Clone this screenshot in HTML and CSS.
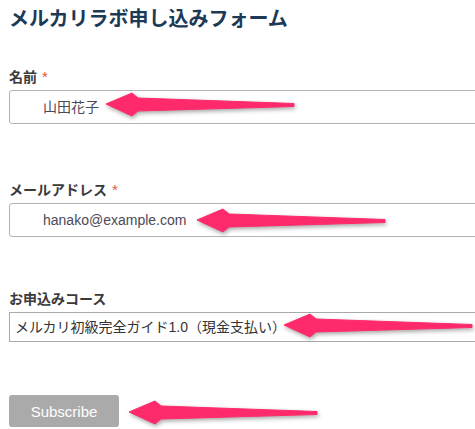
FILE: index.html
```html
<!DOCTYPE html>
<html lang="ja">
<head>
<meta charset="utf-8">
<title>メルカリラボ申し込みフォーム</title>
<link rel="stylesheet" href="styles.css">
</head>
<body>
<div class="page">
  <h1 class="title">メルカリラボ申し込みフォーム</h1>

  <div class="field field-name">
    <label class="label">名前<span class="req">*</span></label>
    <div class="input">山田花子</div>
  </div>

  <div class="field field-email">
    <label class="label">メールアドレス<span class="req">*</span></label>
    <div class="input">hanako@example.com</div>
  </div>

  <div class="field field-course">
    <label class="label">お申込みコース</label>
    <div class="select">メルカリ初級完全ガイド1.0（現金支払い）</div>
  </div>

  <div class="actions">
    <button class="btn" type="button">Subscribe</button>
  </div>
</div>

<svg class="arrow arrow-1" width="200" height="32" viewBox="0 0 200 32"><path d="M4,14 L30,3 L36,8 L192,13.5 L192,16.5 L36,21 L30,26 Z"/></svg>
<svg class="arrow arrow-2" width="200" height="32" viewBox="0 0 200 32"><path d="M4,14 L30,3 L36,8 L192,13.5 L192,16.5 L36,21 L30,26 Z"/></svg>
<svg class="arrow arrow-3" width="200" height="32" viewBox="0 0 200 32"><path d="M4,14 L30,3 L36,8 L192,13.5 L192,16.5 L36,21 L30,26 Z"/></svg>
<svg class="arrow arrow-4" width="200" height="32" viewBox="0 0 200 32"><path d="M4,14 L30,3 L36,8 L192,13.5 L192,16.5 L36,21 L30,26 Z"/></svg>
</body>
</html>
```
FILE: styles.css
```css
html, body {
  margin: 0;
  padding: 0;
  overflow: hidden;
  background: #ffffff;
}
body {
  position: relative;
  width: 475px;
  height: 429px;
  font-family: "Noto Sans CJK JP", "Liberation Sans", sans-serif;
}
.page {
  padding: 4px 0 0 9px;
}
.title {
  margin: 0;
  height: 28px;
  font-size: 20px;
  line-height: 28px;
  font-weight: 700;
  color: #1c3a56;
}
.field {
  display: flex;
  flex-direction: column;
  gap: 4px;
}
.field-name { margin-top: 34px; }
.field-email { margin-top: 55px; }
.field-course { margin-top: 51px; }
.label {
  display: block;
  height: 20px;
  overflow: hidden;
  font-size: 14px;
  line-height: 20px;
  font-weight: 700;
  color: #3a3a3a;
}
.req {
  margin-left: 5px;
  color: #e4583e;
  font-family: "Liberation Sans", sans-serif;
  font-weight: 400;
  font-size: 15px;
}
.input {
  box-sizing: border-box;
  width: 500px;
  height: 34px;
  border: 1px solid #b4b4b4;
  border-radius: 3px;
  padding-left: 33px;
  font-family: "Liberation Sans", "Noto Sans CJK JP", sans-serif;
  font-size: 14px;
  line-height: 32px;
  color: #4d4858;
}
.select {
  box-sizing: border-box;
  width: 500px;
  height: 30px;
  border: 1px solid #a9a9a9;
  padding-left: 5px;
  font-family: "Liberation Sans", "Noto Sans CJK JP", sans-serif;
  font-size: 14px;
  line-height: 28px;
  color: #333;
}
.actions {
  margin-top: 53px;
  height: 32px;
}
.btn {
  display: block;
  box-sizing: border-box;
  width: 110px;
  height: 32px;
  border: none;
  border-radius: 3px;
  background: #aaaaaa;
  color: #ffffff;
  font-family: "Liberation Sans", sans-serif;
  font-size: 15px;
  padding: 0;
}
.arrow {
  position: absolute;
  overflow: visible;
  filter: drop-shadow(1px 2px 2px rgba(0, 0, 0, 0.35));
}
.arrow path {
  fill: #ff2a6b;
  stroke: #ff2a6b;
  stroke-width: 1;
  stroke-linejoin: round;
}
.arrow-1 { left: 102px; top: 90px; }
.arrow-2 { left: 193px; top: 206px; }
.arrow-3 { left: 280px; top: 311px; }
.arrow-4 { left: 125px; top: 398px; }
```
